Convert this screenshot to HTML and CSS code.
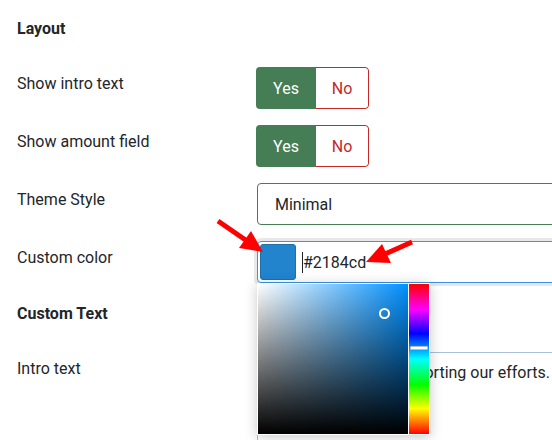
FILE: index.html
```html
<!DOCTYPE html>
<html>
<head>
<meta charset="utf-8">
<link rel="stylesheet" href="styles.css">
</head>
<body>
<div class="page">
  <h3 class="section-title">Layout</h3>
  <div class="row">
    <div class="label">Show intro text</div>
    <div class="control">
      <div class="switch"><span class="yes">Yes</span><span class="no">No</span></div>
    </div>
  </div>
  <div class="row">
    <div class="label">Show amount field</div>
    <div class="control">
      <div class="switch"><span class="yes">Yes</span><span class="no">No</span></div>
    </div>
  </div>
  <div class="row">
    <div class="label">Theme Style</div>
    <div class="control">
      <div class="select">Minimal</div>
    </div>
  </div>
  <div class="row">
    <div class="label">Custom color</div>
    <div class="control">
      <div class="color-input">
        <span class="swatch"></span>
        <span class="caret"></span>
        <span class="color-value">#2184cd</span>
        <div class="picker">
          <div class="sat">
            <span class="sat-marker"></span>
          </div>
          <div class="hue">
            <span class="hue-marker"></span>
          </div>
        </div>
      </div>
    </div>
  </div>
  <h3 class="section-title second">Custom Text</h3>
  <div class="row">
    <div class="label">Intro text</div>
    <div class="control">
      <div class="textarea">Thank you for supporting our efforts.</div>
    </div>
  </div>
</div>
<svg class="arrows" width="552" height="440" viewBox="0 0 552 440">
  <line x1="218" y1="221" x2="247" y2="241" stroke="#ff0000" stroke-width="5"/>
  <polygon points="263,252 239,248 251,231" fill="#ff0000"/>
  <line x1="412" y1="242" x2="385" y2="254" stroke="#ff0000" stroke-width="5"/>
  <polygon points="366,262 382,244 391,263" fill="#ff0000"/>
</svg>
</body>
</html>
```
FILE: styles.css
```css
html, body {
  margin: 0;
  padding: 0;
}
body {
  font-family: Roboto, "Noto Sans", sans-serif;
  color: #22262a;
  background: #fff;
  width: 552px;
  height: 440px;
  overflow: hidden;
  position: relative;
  font-size: 16px;
}
.page {
  padding: 17px 0 0 17px;
}
.section-title {
  font-size: 16px;
  font-weight: 700;
  line-height: 24px;
  margin: 0 0 26px;
}
.section-title.second {
  padding-top: 3px;
}
.row {
  display: flex;
  margin-bottom: 16px;
}
.label {
  width: 240px;
  flex: none;
  padding-top: 5px;
  line-height: 24px;
}
.control {
  width: 420px;
  flex: none;
}
.switch {
  display: inline-flex;
  height: 42px;
  margin-left: -1px;
  border-radius: 4px;
  overflow: hidden;
}
.yes {
  width: 60px;
  background: #457d54;
  color: #fff;
  display: flex;
  align-items: center;
  justify-content: center;
}
.no {
  width: 53px;
  box-sizing: border-box;
  border: 1px solid #c52827;
  border-left: none;
  border-radius: 0 4px 4px 0;
  color: #c52827;
  display: flex;
  align-items: center;
  justify-content: center;
}
.select {
  height: 42px;
  box-sizing: border-box;
  border: 1px solid #457d54;
  border-radius: 4px;
  padding: 0 17px;
  display: flex;
  align-items: center;
}
.color-input {
  position: relative;
  height: 42px;
  box-sizing: border-box;
  border: 1px solid #3d93e0;
  border-radius: 4px;
  box-shadow: 0 0 0 3px #e8e8e8;
  display: flex;
  align-items: center;
  padding-left: 2px;
}
.swatch {
  width: 36px;
  height: 36px;
  box-sizing: border-box;
  background: #2184cd;
  border: 1px solid #1c70ae;
  border-radius: 3px;
  flex: none;
}
.caret {
  width: 1px;
  height: 21px;
  background: #222;
  margin-left: 6px;
}
.color-value {
  margin-left: 0;
}
.picker {
  position: absolute;
  left: -1px;
  top: 41px;
  padding: 1px;
  background: #fff;
  display: flex;
  gap: 1px;
  box-shadow: 0 2px 12px rgba(0, 0, 0, 0.22);
  z-index: 2;
}
.sat {
  position: relative;
  width: 150px;
  height: 150px;
  background:
    linear-gradient(to top, #000, rgba(0, 0, 0, 0)),
    linear-gradient(to right, #fff, rgba(255, 255, 255, 0)),
    hsl(206, 100%, 50%);
}
.sat-marker {
  position: absolute;
  left: 121px;
  top: 24px;
  width: 11px;
  height: 11px;
  box-sizing: border-box;
  border: 2px solid #fff;
  border-radius: 50%;
}
.hue {
  position: relative;
  width: 20px;
  height: 150px;
  background: linear-gradient(to bottom, #ff0000, #ff00ff 17%, #0000ff 33%, #00ffff 50%, #00ff00 67%, #ffff00 83%, #ff0000);
}
.hue-marker {
  position: absolute;
  left: 1px;
  top: 62px;
  width: 18px;
  height: 4px;
  box-sizing: border-box;
  background: #fff;
  border: 1px solid #bbb;
  border-radius: 1px;
}
.textarea {
  height: 120px;
  box-sizing: border-box;
  border: 1px solid #a9c0da;
  border-radius: 4px;
  padding: 8px 17px 8px 30px;
  line-height: 24px;
  white-space: nowrap;
}
.arrows {
  position: absolute;
  left: 0;
  top: 0;
  pointer-events: none;
  z-index: 5;
}
```
